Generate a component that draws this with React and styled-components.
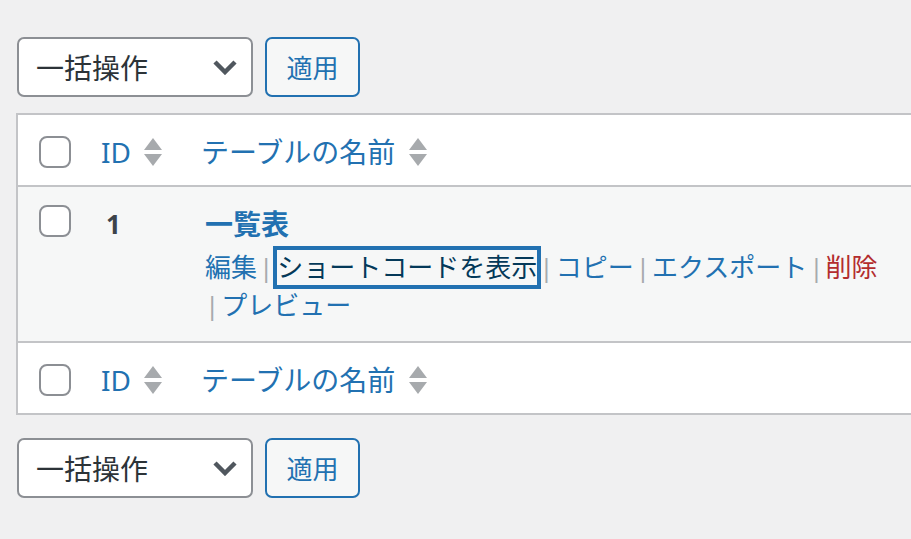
import React from 'react';
import styled, { createGlobalStyle } from 'styled-components';

const GlobalStyle = createGlobalStyle`
    html, body {
        margin: 0;
        padding: 0;
        background: #f0f0f1;
        overflow: hidden;
    }
    body {
        font-family: "Noto Sans", "Noto Sans CJK JP", sans-serif;
        color: #3c434a;
    }
`;

const Page = styled.div`
    padding: 37px 0 0 16px;
    width: 1100px;
`;

const TableNav = styled.div`
    display: flex;
    gap: 12px;
    padding-left: 1px;
    margin-bottom: ${({ $bottom }) => ($bottom ? '0' : '16px')};
    margin-top: ${({ $bottom }) => ($bottom ? '23px' : '0')};
`;

const BulkSelect = styled.div`
    display: flex;
    align-items: center;
    justify-content: space-between;
    box-sizing: border-box;
    width: 236px;
    height: 60px;
    padding: 0 14px 0 17px;
    background: #fff;
    border: 2px solid #8c8f94;
    border-radius: 7px;
    font-size: 28px;
    color: #2c3338;
`;

const ApplyButton = styled.button`
    box-sizing: border-box;
    width: 95px;
    height: 60px;
    padding: 0;
    background: #f6f7f7;
    border: 2px solid #2271b1;
    border-radius: 7px;
    font-family: inherit;
    font-size: 26px;
    color: #2271b1;
`;

const ListTable = styled.div`
    width: 1000px;
    background: #fff;
    border: 2px solid #c3c4c7;
`;

const Row = styled.div`
    display: grid;
    grid-template-columns: 83px 100px 1fr;
    align-items: ${({ $body }) => ($body ? 'start' : 'center')};
    padding: ${({ $body }) => ($body ? '17px 0 17px' : '21px 0 17px')};
    background: ${({ $body }) => ($body ? '#f6f7f7' : '#fff')};
    border-top: ${({ $body }) => ($body ? '2px solid #c3c4c7' : 'none')};
    border-bottom: ${({ $body }) => ($body ? '2px solid #c3c4c7' : 'none')};
`;

const CheckCell = styled.div`
    display: flex;
    padding-left: 21px;
    padding-top: ${({ $body }) => ($body ? '1px' : '0')};
`;

const Checkbox = styled.input`
    appearance: none;
    margin: 0;
    box-sizing: border-box;
    width: 32px;
    height: 32px;
    background: #fff;
    border: 2px solid #8c8f94;
    border-radius: 8px;
`;

const SortLink = styled.div`
    display: flex;
    align-items: center;
    gap: ${({ $gap }) => $gap || '13px'};
    font-size: 28px;
    line-height: 32px;
    color: #2271b1;
`;

const IdText = styled.div`
    padding-left: 5px;
    font-size: 26px;
    font-weight: 700;
    line-height: 40px;
    color: #3c434a;
`;

const NameCell = styled.div`
    padding-left: 4px;
`;

const RowTitle = styled.div`
    font-size: 28px;
    font-weight: 700;
    line-height: 40px;
    color: #2271b1;
`;

const RowActions = styled.div`
    display: flex;
    flex-wrap: wrap;
    column-gap: 2px;
    width: 700px;
    margin-top: 4px;
    font-size: 26px;
    line-height: 38px;
`;

const Action = styled.span`
    display: inline-flex;
    align-items: center;
    white-space: nowrap;
`;

const Sep = styled.span`
    margin-right: 2px;
    color: #a7aaad;
`;

const ActionLink = styled.span`
    color: ${({ $danger }) => ($danger ? '#b32d2e' : '#2271b1')};
`;

const FocusedLink = styled.span`
    display: inline-block;
    margin-left: 2px;
    line-height: 35px;
    color: #043959;
    box-shadow: 0 0 0 4px #2271b1;
`;

const SortArrows = () => (
    <svg width="18" height="28" viewBox="0 0 18 28">
        <path d="M9 0 L18 12 L0 12 Z" fill="#a7aaad" />
        <path d="M0 16 L18 16 L9 28 Z" fill="#a7aaad" />
    </svg>
);

const Chevron = () => (
    <svg width="24" height="16" viewBox="0 0 24 16">
        <polyline points="2,3 12,13 22,3" fill="none" stroke="#50575e" strokeWidth="4.5" />
    </svg>
);

const Nav = ({ bottom }) => (
    <TableNav $bottom={bottom}>
        <BulkSelect>
            <span>一括操作</span>
            <Chevron />
        </BulkSelect>
        <ApplyButton>適用</ApplyButton>
    </TableNav>
);

const HeadRow = () => (
    <Row>
        <CheckCell>
            <Checkbox type="checkbox" />
        </CheckCell>
        <SortLink>
            <span>ID</span>
            <SortArrows />
        </SortLink>
        <SortLink $gap="14px">
            <span>テーブルの名前</span>
            <SortArrows />
        </SortLink>
    </Row>
);

const actions = [
    { label: '編集' },
    { label: 'ショートコードを表示', focused: true },
    { label: 'コピー' },
    { label: 'エクスポート' },
    { label: '削除', danger: true },
    { label: 'プレビュー' },
];

const App = () => {
    return (
        <>
            <GlobalStyle />
            <Page>
                <Nav />
                <ListTable>
                    <HeadRow />
                    <Row $body>
                        <CheckCell $body>
                            <Checkbox type="checkbox" />
                        </CheckCell>
                        <IdText>1</IdText>
                        <NameCell>
                            <RowTitle>一覧表</RowTitle>
                            <RowActions>
                                {actions.map((a, i) => (
                                    <Action key={a.label}>
                                        {i > 0 && <Sep>|</Sep>}
                                        {a.focused ? (
                                            <FocusedLink>{a.label}</FocusedLink>
                                        ) : (
                                            <ActionLink $danger={a.danger}>{a.label}</ActionLink>
                                        )}
                                    </Action>
                                ))}
                            </RowActions>
                        </NameCell>
                    </Row>
                    <HeadRow />
                </ListTable>
                <Nav bottom />
            </Page>
        </>
    );
};

export default App;
